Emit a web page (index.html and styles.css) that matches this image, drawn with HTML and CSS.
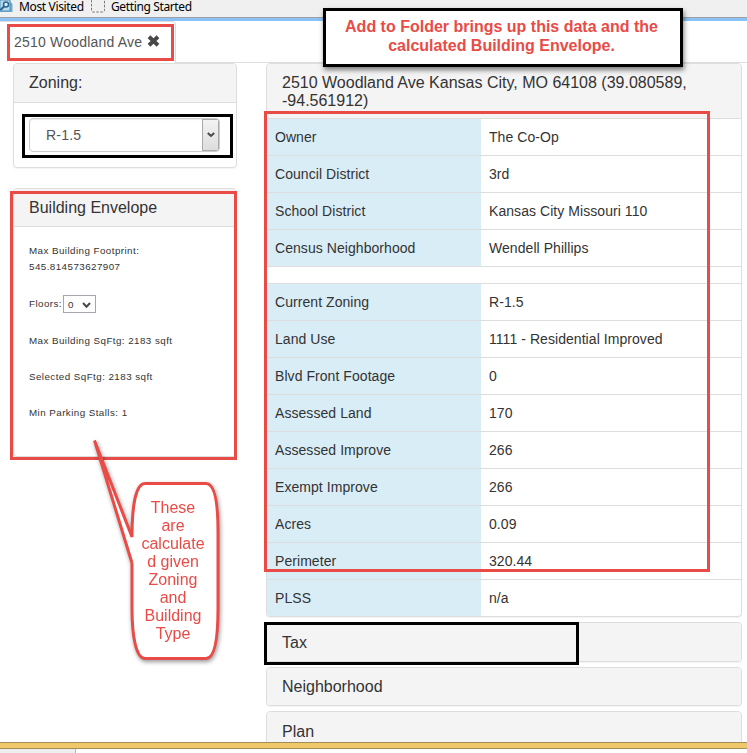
FILE: index.html
```html
<!DOCTYPE html>
<html lang="en">
<head>
<meta charset="utf-8">
<title>2510 Woodland Ave</title>
<link rel="stylesheet" href="styles.css">
</head>
<body>
<div class="app">
  <header class="bookmarks">
    <svg class="visited-icon" width="13" height="14" viewBox="0 0 13 14"><path d="M0 0H9L12.500 4V12H0Z" fill="#6fa9cc"/><path d="M0 0H10V11H0Z" fill="#b7dcef" stroke="#5391b7"/><circle cx="6" cy="4.500" r="2.500" fill="#d8f0fb" stroke="#2b6690" stroke-width="1.500"/><path d="M4 6.500L0.500 10" stroke="#2b6690" stroke-width="2"/></svg>
    <span class="bookmark visited">Most Visited</span>
    <svg class="page-icon" width="14" height="14" viewBox="0 0 14 14"><rect x=".5" y="-.5" width="13" height="12.500" rx="1.500" fill="none" stroke="#777" stroke-dasharray="2.500 1.500"/></svg>
    <span class="bookmark started">Getting Started</span>
  </header>
  <nav class="tabs">
    <div class="tab"><span class="tab-label">2510 Woodland Ave</span>
      <svg class="close" width="13" height="12" viewBox="0 0 13 12"><path d="M2 1.800L11 10.200M11 1.800L2 10.200" stroke="#484848" stroke-width="3.900"/></svg>
    </div>
  </nav>
  <main class="columns">
    <aside class="side">
      <section class="panel zoning">
        <h2>Zoning:</h2>
        <div class="zoning-body"><div class="select"><span>R-1.5</span><div class="arrow"><svg width="8" height="6" viewBox="0 0 8 6"><path d="M.8 1L4 4L7.200 1" fill="none" stroke="#484848" stroke-width="2"/></svg></div></div></div>
      </section>
      <section class="panel envelope">
        <h2>Building Envelope</h2>
        <div class="envelope-body">
          <p class="footprint">Max Building Footprint:<br>545.814573627907</p>
          <p class="floors">Floors: <span class="floor-select">0<svg width="9" height="7" viewBox="0 0 9 7"><path d="M1 1L4.500 4.700L8 1" fill="none" stroke="#484848" stroke-width="2"/></svg></span></p>
          <p>Max Building SqFtg: 2183 sqft</p>
          <p>Selected SqFtg: 2183 sqft</p>
          <p>Min Parking Stalls: 1</p>
        </div>
      </section>
    </aside>
    <div class="details">
      <section class="panel property">
        <h2>2510 Woodland Ave Kansas City, MO 64108 (39.080589, -94.561912)</h2>
        <dl>
          <div class="row"><dt>Owner</dt><dd>The Co-Op</dd></div>
          <div class="row"><dt>Council District</dt><dd>3rd</dd></div>
          <div class="row"><dt>School District</dt><dd>Kansas City Missouri 110</dd></div>
          <div class="row"><dt>Census Neighborhood</dt><dd>Wendell Phillips</dd></div>
          <div class="row gap"></div>
          <div class="row"><dt>Current Zoning</dt><dd>R-1.5</dd></div>
          <div class="row"><dt>Land Use</dt><dd>1111 - Residential Improved</dd></div>
          <div class="row"><dt>Blvd Front Footage</dt><dd>0</dd></div>
          <div class="row"><dt>Assessed Land</dt><dd>170</dd></div>
          <div class="row"><dt>Assessed Improve</dt><dd>266</dd></div>
          <div class="row"><dt>Exempt Improve</dt><dd>266</dd></div>
          <div class="row"><dt>Acres</dt><dd>0.09</dd></div>
          <div class="row"><dt>Perimeter</dt><dd>320.44</dd></div>
          <div class="row"><dt>PLSS</dt><dd>n/a</dd></div>
        </dl>
      </section>
      <section class="panel folded tax"><h2>Tax</h2></section>
      <section class="panel folded"><h2>Neighborhood</h2></section>
      <section class="panel folded plan"><h2>Plan</h2></section>
    </div>
  </main>
  <footer><div class="gold"></div><div class="status"></div></footer>

  <div class="mark red mark-tab"></div>
  <div class="mark black mark-zoning"></div>
  <div class="mark red mark-envelope"></div>
  <div class="mark red mark-table"></div>
  <div class="mark black mark-tax"></div>
  <div class="note">Add to Folder brings up this data and the<br>calculated Building Envelope.</div>
  <div class="callout">
    <svg width="140" height="235" viewBox="0 0 140 235"><path d="M47.500 101L9.500 6L47.500 128V172C47.500 200 51 222 60 222H121C130 222 133 200 133 172V96C133 68 130 48 121 48H60C51 48 47.500 68 47.500 90Z" fill="#fff" stroke="none"/><path d="M47 127V172C47 200 51 222.500 60 222.500H121C130 222.500 133 200 133 172V96C133 68 130 47.500 121 47.500H60C51 47.500 47 68 47 101L9.500 4.500L47 127" fill="none" stroke="#e94b46" stroke-width="3" stroke-linejoin="bevel"/></svg>
    <p>These<br>are<br>calculate<br>d given<br>Zoning<br>and<br>Building<br>Type</p>
  </div>
</div>
</body>
</html>
```
FILE: styles.css
```css
* { box-sizing: border-box; }
body { margin: 0; font: 14px/20px "Liberation Sans", Arial, sans-serif; color: #333; background: #fff; }
h2, p, dl, dd { margin: 0; }
svg { display: block; flex: none; }
.app { position: relative; width: 747px; height: 753px; overflow: hidden; display: flex; flex-direction: column; }
.bookmarks { flex: none; height: 21px; background: #f0f0f0; border-bottom: 3px solid #88c2f6; box-shadow: inset 0 -1px #a0a0a0; display: flex; align-items: flex-start; font: 12px/13px "Noto Sans", sans-serif; color: #000; }
.bookmark { white-space: nowrap; }
.visited { margin-left: 6px; width: 72px; letter-spacing: -.35px; }
.started { margin-left: 6px; letter-spacing: -.37px; }
.tabs { flex: none; height: 42px; border-bottom: 1px solid #ddd; }
.tab { width: 176px; height: 42px; border: 1px solid #ddd; border-left: 0; border-bottom: 0; border-radius: 0 4px 0 0; background: #fff; padding: 10px 0 0 14px; display: flex; color: #555; }
.tab-label { width: 133px; white-space: nowrap; letter-spacing: .2px; }
.close { margin-top: 3px; }
.columns { flex: none; height: 679px; overflow: hidden; display: flex; gap: 29px; padding-left: 13px; }
.side { width: 224px; }
.details { width: 476px; }
.panel { border: 1px solid #ddd; border-radius: 4px; box-shadow: 0 1px 1px rgba(0,0,0,.05); background: #fff; overflow: hidden; }
.panel h2 { background: #f4f4f4; border-bottom: 1px solid #ddd; padding: 10px 15px; font-size: 16px; line-height: 18px; font-weight: normal; }
.zoning { height: 105px; margin-bottom: 20px; }
.zoning-body { padding: 15px; }
.select { width: 191px; height: 34px; border: 1px solid #ccc; border-radius: 4px; display: flex; justify-content: space-between; padding-left: 16px; line-height: 32px; color: #555; letter-spacing: .2px; overflow: hidden; box-shadow: inset 0 1px 1px rgba(0,0,0,.08); }
.arrow { width: 17px; border: 1px solid #aaa; background: linear-gradient(#f3f3f3, #ddd); display: flex; align-items: center; justify-content: center; }
.envelope { height: 269px; }
.envelope h2 { height: 38px; }
.envelope-body { padding: 16px 15px; font-size: 9.8px; line-height: 16px; letter-spacing: .44px; color: #333; }
.envelope p { margin-bottom: 20px; white-space: nowrap; }
.envelope .floors { display: flex; height: 18px; align-items: center; gap: 1px; }
.floor-select { width: 33px; height: 18px; border: 1px solid #a5a5ad; display: flex; align-items: center; justify-content: space-between; padding: 1px 4px 0; }
.floor-select svg { margin-top: 2px; }
.property { height: 554px; margin-bottom: 5px; }
.property h2 { height: 55px; padding-bottom: 8px; }
.row { display: flex; height: 37px; border-bottom: 1px solid #ddd; line-height: 20px; letter-spacing: .06px; }
.row:last-child { border-bottom: 0; }
.row.gap { height: 17px; }
.row dt { width: 214px; background: #d9edf7; padding: 8px; }
.row dd { padding: 8px; }
.folded { height: 39px; margin-bottom: 5px; }
.folded.tax { height: 40px; }
.folded h2 { border: 0; height: 38px; }
.folded.tax h2, .folded.plan h2 { padding-top: 11px; }
footer { flex: none; }
.gold { height: 7px; background: #f0c869; border: solid #a18d58; border-width: 1px 0; }
.status { width: 76px; height: 4px; background: #eee; border-right: 1px solid #b8b8b8; }
.mark { position: absolute; border: 3px solid #e94b46; }
.mark.black { border-color: #000; }
.mark-tab { left: 7px; top: 24px; width: 167px; height: 37px; }
.mark-zoning { left: 22px; top: 114px; width: 211px; height: 44px; }
.mark-envelope { left: 10px; top: 191px; width: 227px; height: 269px; }
.mark-table { left: 264px; top: 111px; width: 446px; height: 461px; }
.mark-tax { left: 264px; top: 622px; width: 315px; height: 43px; }
.note { position: absolute; left: 323px; top: 8px; width: 360px; height: 59px; background: #fff; border: 3px solid #000; box-shadow: 1px 3px 5px rgba(0,0,0,.5); padding: 6px 3px 0 0; text-align: center; white-space: nowrap; font-weight: bold; font-size: 16px; line-height: 19px; color: #e94b46; }
.callout { position: absolute; left: 85px; top: 436px; width: 140px; height: 235px; filter: drop-shadow(1px 2px 2px rgba(0,0,0,.4)); }
.callout p { position: absolute; left: 50px; top: 63px; width: 76px; text-align: center; font-size: 16px; line-height: 18px; color: #e94b46; }
```
